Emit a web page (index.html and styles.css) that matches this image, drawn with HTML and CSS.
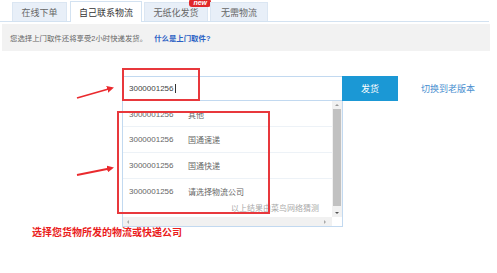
FILE: index.html
```html
<!DOCTYPE html>
<html>
<head>
  <meta charset="utf-8" />
  <title>发货</title>
  <link rel="stylesheet" href="styles.css">
</head>
<body>

<div class="tabs">
  <div class="tab tab-order">在线下单</div>
  <div class="tab tab-self active">自己联系物流</div>
  <div class="tab tab-paperless">无纸化发货<span class="badge">new</span></div>
  <div class="tab tab-none">无需物流</div>
</div>

<div class="notice">
  您选择上门取件还将享受2小时快递发货。
  <a class="notice-link" href="#">什么是上门取件?</a>
</div>

<div class="ship">
  <div class="ship-row">
    <div class="waybill">3000001256<span class="caret"></span></div>
    <button class="send">发货</button>
    <a class="old-version" href="#">切换到老版本</a>
  </div>

  <div class="suggest">
    <div class="suggest-list">
      <div class="item first"><span class="num">3000001256</span><span class="co">其他</span></div>
      <div class="item"><span class="num">3000001256</span><span class="co">国通速递</span></div>
      <div class="item"><span class="num">3000001256</span><span class="co">国通快递</span></div>
      <div class="item last"><span class="num">3000001256</span><span class="co">请选择物流公司</span></div>
      <div class="suggest-foot">以上结果由菜鸟网络猜测</div>
    </div>
    <div class="vbar">
      <span class="arrow up"></span>
      <span class="thumb"></span>
      <span class="arrow down"></span>
    </div>
    <div class="hbar">
      <span class="arrow left"></span>
      <span class="arrow right"></span>
    </div>
    <div class="corner"></div>
  </div>

  <p class="caption">选择您货物所发的物流或快递公司</p>
</div>

<!-- annotations drawn over the screenshot -->
<div class="mark mark-input"></div>
<div class="mark mark-list"></div>
<svg class="arrows" width="497" height="273">
  <defs>
    <marker id="head" markerWidth="7" markerHeight="7" refX="5" refY="3.5" orient="auto" markerUnits="userSpaceOnUse">
      <path d="M0 0 L7 3.5 L0 7 Z" fill="#ea2a2e" />
    </marker>
  </defs>
  <line x1="77" y1="98" x2="112" y2="88" stroke="#ea2a2e" stroke-width="1.8" marker-end="url(#head)" />
  <line x1="77" y1="175" x2="112" y2="168" stroke="#ea2a2e" stroke-width="1.8" marker-end="url(#head)" />
</svg>

</body>
</html>
```

FILE: styles.css
```css
body {
  margin: 0;
  width: 497px;
  height: 273px;
  overflow: hidden;
  position: relative;
  background: #fff;
  color: #555;
  font-family: "Liberation Sans", "Noto Sans CJK SC", sans-serif;
}

.tabs {
  display: flex;
  align-items: flex-end;
  height: 21px;
  padding-left: 12px;
  margin-right: 8px;
  border-bottom: 1px solid #d3e2f1;
}

.tab {
  position: relative;
  height: 18px;
  margin-right: 2px;
  display: flex;
  align-items: center;
  justify-content: center;
  background: #e8eff8;
  border: 1px solid #dbe6f2;
  border-bottom: none;
  font-size: 9px;
  color: #666;
}

.tab-order { width: 53px; margin-right: 3px; }
.tab-self { width: 70px; }
.tab-paperless { width: 62px; }
.tab-none { width: 56px; }

.tab.active {
  height: 20px;
  margin-bottom: -1px;
  background: #fff;
  border-color: #d3e2f1;
  color: #333;
}

.badge {
  position: absolute;
  top: -4px;
  right: -4px;
  padding: 0 4px;
  height: 8px;
  line-height: 8px;
  border-radius: 3px;
  background: #e0282a;
  color: #fff;
  font-size: 7px;
  font-style: italic;
  font-weight: bold;
}

.notice {
  display: flex;
  align-items: center;
  height: 27px;
  margin: 2px 7px 0 2px;
  padding-left: 8px;
  background: #f2f2f2;
  font-size: 7.4px;
  color: #666;
}

.notice-link {
  margin-left: 7px;
  color: #2a5fc4;
  font-weight: bold;
  text-decoration: none;
}

.ship {
  padding-top: 25px;
}

.ship-row {
  display: flex;
  align-items: center;
  margin-left: 122px;
  height: 25px;
}

.waybill {
  box-sizing: border-box;
  width: 220px;
  height: 25px;
  padding-left: 6px;
  display: flex;
  align-items: center;
  border: 1px solid #c2d9f0;
  border-right: none;
  font-size: 8px;
  color: #444;
}

.caret {
  width: 1px;
  height: 9px;
  margin-left: 1px;
  background: #333;
}

.send {
  width: 56px;
  height: 25px;
  border: none;
  background: #1b98d5;
  color: #fff;
  font-family: inherit;
  font-size: 9px;
  padding: 0;
}

.old-version {
  margin-left: 23px;
  font-size: 9px;
  color: #4a8fd0;
  text-decoration: none;
}

.suggest {
  box-sizing: border-box;
  width: 221px;
  height: 126px;
  margin-left: 122px;
  display: grid;
  grid-template-columns: 1fr 10px;
  grid-template-rows: 1fr 9px;
  border: 1px solid #c2d9f0;
  border-top: none;
}

.suggest-list {
  overflow: hidden;
}

.item {
  display: flex;
  align-items: center;
  height: 25px;
  padding-left: 6px;
  border-bottom: 1px solid #edf2f7;
  font-size: 8px;
  color: #666;
}

.item.first { height: 24px; padding-top: 1px; }
.item.last { border-bottom: none; }

.num { width: 59px; }

.suggest-foot {
  padding-right: 13px;
  text-align: right;
  font-size: 8px;
  line-height: 10px;
  color: #aaa;
}

.vbar {
  display: flex;
  flex-direction: column;
  align-items: center;
  background: #f1f1f1;
}

.thumb {
  width: 8px;
  flex: 1;
  margin: 1px 0 6px;
  background: #c1c1c1;
}

.arrow {
  width: 0;
  height: 0;
  border: 2px solid transparent;
}

.arrow.up { margin: 3px 0 2px; border-bottom: 2px solid #999; border-top: none; }
.arrow.down { margin: 0 0 3px; border-top: 2px solid #555; border-bottom: none; }

.hbar {
  display: flex;
  align-items: center;
  justify-content: space-between;
  padding: 0 6px 0 4px;
  background: #f1f1f1;
}

.arrow.left { border-right: 2px solid #aaa; border-left: none; }
.arrow.right { border-left: 2px solid #aaa; border-right: none; }

.corner {
  background: #fff;
}

.caption {
  margin: 0 0 0 32px;
  line-height: 12px;
  font-size: 10px;
  font-weight: bold;
  color: #ea1c1c;
}

.mark {
  position: absolute;
  box-sizing: border-box;
  border: 2px solid #e8383c;
}

.mark-input {
  left: 122px;
  top: 68px;
  width: 78px;
  height: 33px;
}

.mark-list {
  left: 117px;
  top: 111px;
  width: 153px;
  height: 103px;
}

.arrows {
  position: absolute;
  left: 0;
  top: 0;
}
```
